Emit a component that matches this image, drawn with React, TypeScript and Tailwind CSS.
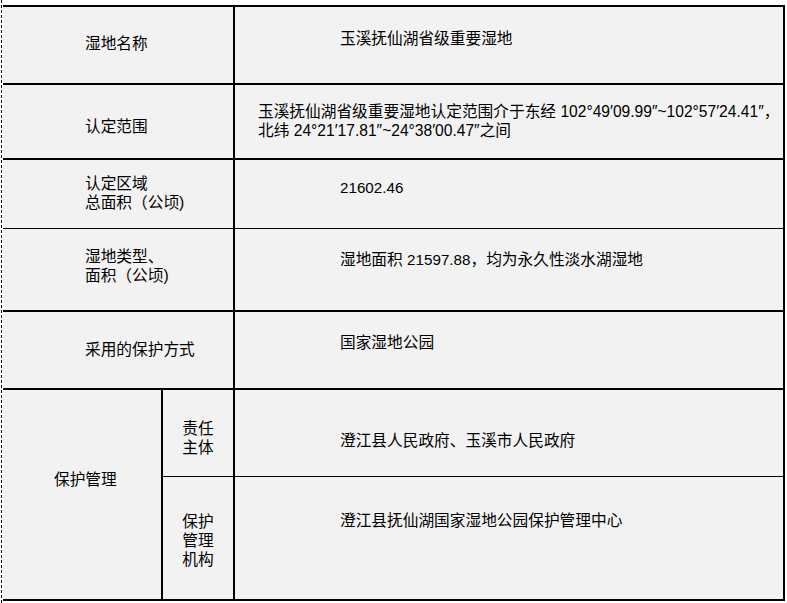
import React from "react";

export default function App() {
  return (
    <div className="w-[787px] h-[603px] bg-white flex overflow-hidden font-['Liberation_Sans','Noto_Sans_CJK_SC',sans-serif] text-[15.7px] leading-[19px] text-black">
      <div className="ml-[1px] h-full border-l border-dashed border-black" />
      <div className="ml-[1px] mt-[5px] w-[782px] self-start flex flex-col border-t-2 border-r-2 border-black bg-[#f2f2f2]">
        {/* Row 1 */}
        <div className="flex h-[78px] border-b-2 border-black">
          <div className="w-[232px] border-r-2 border-black pl-[82px] pt-[27px]">湿地名称</div>
          <div className="flex-1 pl-[105px] pt-[22px]">玉溪抚仙湖省级重要湿地</div>
        </div>
        {/* Row 2 */}
        <div className="flex h-[75px] border-b-2 border-black">
          <div className="w-[232px] border-r-2 border-black pl-[82px] pt-[32px]">认定范围</div>
          <div className="flex-1 pl-[23px] pt-[17px] whitespace-nowrap">
            玉溪抚仙湖省级重要湿地认定范围介于东经 <span className="text-[15.6px]">102°49′09.99″~102°57′24.41″</span>，
            <br />
            北纬 <span className="text-[15.6px]">24°21′17.81″~24°38′00.47″</span>之间
          </div>
        </div>
        {/* Row 3 */}
        <div className="flex h-[69px] border-b border-black">
          <div className="w-[232px] border-r-2 border-black pl-[82px] pt-[14px]">
            认定区域
            <br />
            总面积（公顷)
          </div>
          <div className="flex-1 pl-[105px] pt-[18px]">
            <span className="text-[15.2px]">21602.46</span>
          </div>
        </div>
        {/* Row 4 */}
        <div className="flex h-[83px] border-b-2 border-black">
          <div className="w-[232px] border-r-2 border-black pl-[82px] pt-[18px]">
            湿地类型、
            <br />
            面积（公顷)
          </div>
          <div className="flex-1 pl-[105px] pt-[21px]">
            湿地面积 <span className="text-[15.2px]">21597.88</span>，均为永久性淡水湖湿地
          </div>
        </div>
        {/* Row 5 */}
        <div className="flex h-[78px] border-b-2 border-black">
          <div className="w-[232px] border-r-2 border-black pl-[82px] pt-[28px]">采用的保护方式</div>
          <div className="flex-1 pl-[105px] pt-[21px]">国家湿地公园</div>
        </div>
        {/* Row 6 */}
        <div className="flex h-[211px] border-b-2 border-black">
          <div className="w-[160px] border-r-2 border-black pl-[51px] pt-[80px]">保护管理</div>
          <div className="flex-1 flex flex-col">
            <div className="flex h-[87px] border-b border-black">
              <div className="w-[72px] border-r-2 border-black pt-[29px] text-center">
                责任
                <br />
                主体
              </div>
              <div className="flex-1 pl-[105px] pt-[41px]">澄江县人民政府、玉溪市人民政府</div>
            </div>
            <div className="flex flex-1">
              <div className="w-[72px] border-r-2 border-black pt-[35px] text-center">
                保护
                <br />
                管理
                <br />
                机构
              </div>
              <div className="flex-1 pl-[105px] pt-[34px]">澄江县抚仙湖国家湿地公园保护管理中心</div>
            </div>
          </div>
        </div>
      </div>
    </div>
  );
}
